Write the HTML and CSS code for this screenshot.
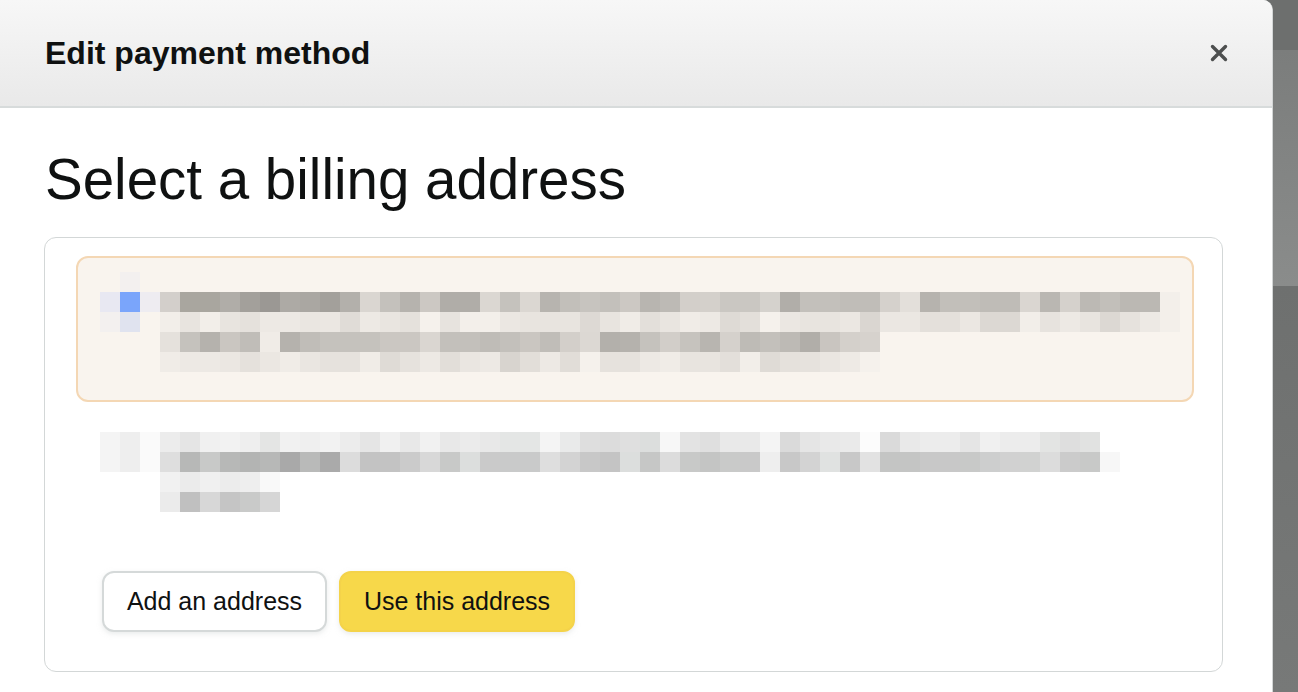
FILE: index.html
```html
<!DOCTYPE html>
<html lang="en">
<head>
<meta charset="utf-8">
<title>Edit payment method</title>
<link rel="stylesheet" href="styles.css">
</head>
<body>
<div class="modal">
  <header class="head">
    <h2>Edit payment method</h2>
    <button class="close" aria-label="Close">
      <svg width="18" height="18" viewBox="0 0 18 18"><path d="M2.5 2.5 L15.5 15.5 M15.5 2.5 L2.5 15.5" stroke="#4d4f4f" stroke-width="3.4" stroke-linecap="round" fill="none"/></svg>
    </button>
  </header>
  <main class="content">
    <h1 class="title">Select a billing address</h1>
    <section class="card">
      <div class="addr selected" id="addr1"></div>
      <div class="addr plain" id="addr2"></div>
      <div class="actions">
        <button class="btn btn-secondary">Add an address</button>
        <button class="btn btn-primary">Use this address</button>
      </div>
    </section>
  </main>
</div>
<div class="backdrop"></div>
<script src="script.js"></script>
</body>
</html>
```

FILE: styles.css
```css
* { box-sizing: border-box; }

html, body { height: 100%; }

body {
  margin: 0;
  height: 692px;
  overflow: hidden;
  display: flex;
  background: #6d6f6e;
  font-family: "Liberation Sans", Arial, sans-serif;
  color: #0f1111;
}

.modal {
  flex: none;
  width: 1273px;
  height: 692px;
  background: #fff;
  border-top-right-radius: 10px;
  border-right: 1px solid #d3d6d6;
  overflow: hidden;
}

.backdrop {
  flex: 1;
  background: linear-gradient(to bottom,
    #6d6f6e 0, #6d6f6e 50px,
    #7b7d7c 50px, #8a8c8b 286px,
    #6e706f 286px, #777978 100%);
}

.head {
  height: 108px;
  background: linear-gradient(to bottom, #f7f7f7, #e9e9e9);
  border-bottom: 2px solid #d7dbdb;
  display: flex;
  align-items: center;
  justify-content: space-between;
  padding: 0 44px 0 45px;
}

.head h2 {
  margin: 0;
  font-size: 32px;
  font-weight: 700;
  color: #0f1111;
}

.close {
  border: 0;
  background: none;
  padding: 0;
  width: 18px;
  height: 18px;
  display: flex;
}

.content {
  padding: 0 49px 0 44px;
}

.title {
  margin: 38px 0 24px 1px;
  font-size: 56.5px;
  line-height: 67px;
  font-weight: 400;
}

.card {
  border: 1px solid #d3d7d7;
  border-radius: 12px;
  padding: 18px 28px 39px 31px;
}

.addr {
  border: 2px solid transparent;
  border-radius: 12px;
  padding-left: 22px;
}

.addr.selected {
  height: 146px;
  padding-top: 14px;
  background: #f9f4ee;
  border-color: #f4d7b4;
}

.addr.plain {
  padding-top: 28px;
}

.px-row {
  display: flex;
  height: 20px;
}

.px {
  flex: none;
  width: 20px;
  height: 20px;
}

.actions {
  display: flex;
  gap: 12px;
  margin-top: 57px;
  padding-left: 26px;
}

.btn {
  height: 61px;
  border-radius: 12px;
  font-family: "Liberation Sans", Arial, sans-serif;
  font-size: 25px;
  color: #0f1111;
  padding: 0;
  white-space: nowrap;
  box-shadow: 0 2px 5px rgba(213, 217, 217, 0.5);
  cursor: pointer;
}

.btn-secondary {
  width: 225px;
  background: #fff;
  border: 2px solid #d5d9d9;
}

.btn-primary {
  width: 236px;
  background: #f7d84a;
  border: 2px solid #f4d34a;
}
```

FILE: script.js
```js
(function () {
  var r2 = ['#d3cfcb','#a9a69f','#a9a69f','#b0ada8','#a3a09b','#9b9894','#adaaa5','#aaa7a2','#a3a09b','#b3b0ab','#dad6d1','#c4c1bc','#b6b3ae','#ccc8c3','#b0ada8','#b0ada8','#dbd7d2','#c5c2bd','#dbd7d2','#b7b4af','#c2bfba','#c7c4bf',
    '#c3c0bb','#ccc8c3','#b8b5b0','#bdbab5','#d3cfca','#d4d0cb','#cac7c2','#cac7c2','#d5d2cd','#b1aea9','#c3c0bb','#c3c0bb','#c0bdb8','#c0bdb8','#d5d1cc','#e3dfda','#b6b3ae','#c2bfba','#c2bfba','#bfbcb7','#bfbcb7','#dad6d1','#bab7b2','#d5d1cc','#bcb9b4','#c2bfba','#bbb8b3','#bbb8b3','#f3efea'];
  var r3 = ['#f2eee9','#e8e4df','#f2eee9','#e8e4df','#e5e1dc','#ede9e4','#ede9e4','#eae6e1','#ebe7e2','#e0dcd7','#ede9e4','#e9e5e0','#e5e1dc','#f5f1ec','#e7e3de','#f3efea','#f3efea','#ebe7e2','#e8e4df','#e8e4df','#e8e4df','#ddd9d4','#e8e4df','#f0ece7','#e3dfda','#e9e5e0','#f0ece7','#ede9e4','#dedad5','#e3dfda','#f5f1ec','#ebe7e2','#e8e4df','#e8e4df','#ebe7e2','#dad6d1','#ebe7e2','#ebe7e2','#e4e0db','#e4e0db','#ebe7e2','#dcd8d3','#dcd8d3','#f2eee9','#e7e3de','#ede9e4','#e8e4df','#dcd8d3','#e6e2dd','#ede9e4','#f3efea'];
  var r4 = ['#e5e1dc','#c5c2bd','#b5b2ad','#cac6c1','#c0bdb8','#f0ece7','#b5b2ad','#c0bdb8','#c5c2bd','#c5c2bd','#c5c2bd','#cbc7c2','#cbc7c2','#dad6d1','#c3c0bb','#c3c0bb','#bfbcb7','#c3c0bb','#cac6c1','#c0bdb8','#d3cfca','#dcd8d3',
    '#b3b0ab','#b5b2ad','#c5c2bd','#d2cec9','#c6c3be','#b8b5b0','#d5d1cc','#bebbb6','#c3c0bb','#bdbab5','#b1aea9','#c9c5c0','#d4d0cb','#d6d2cd'];
  var r5 = ['#f0ece7','#ede9e4','#ede9e4','#ebe7e2','#e5e1dc','#ebe7e2','#f0ece7','#eae6e1','#e6e2dd','#e6e2dd','#f0ece7','#dfdbd6','#e6e2dd','#ede9e4','#e2ded9','#eae6e1','#ede9e4','#d8d4cf','#e2ded9','#ede9e4','#e1ddd8','#f5f1ec',
    '#e6e2dd','#e6e2dd','#ede9e4','#f0ece7','#e8e4df','#e8e4df','#e3dfda','#f2eee9','#dfdbd6','#e5e1dc','#e6e2dd','#eae6e1','#eeeae5','#f5f1ec'];

  var sel = [
    [null, '#f3f0ef'],
    ['#e8e8f2', '#7aa5fb', '#eeecf1'].concat(r2),
    ['#f3f0ef', '#e0e3ef', null].concat(r3),
    [null, null, null].concat(r4),
    [null, null, null].concat(r5)
  ];

  var a = ['#f4f4f4','#eeeeee','#fafafa','#ececec','#e5e5e5','#f0f0f0','#f2f2f2','#eeeeee','#e4e5e4','#f1f1f1','#efefef','#f2f2f2','#ececec','#e5e5e5','#f0f0f0','#e8e8e8','#f1f1f1','#e8e8e8','#ebebeb','#e8e8e8','#e4e6e5','#e4e6e5','#f4f4f4','#e9eaea','#dedede',
    '#dcdcdc','#dfdfdf','#dcdedd','#f7f7f7','#e3e3e3','#dfdfdf','#e9e9e9','#e9e9e9','#f4f4f4','#dadada','#e5e5e5','#e9e9e9','#eaeaea','#fcfcfc','#dadada','#e9e9e9','#ececec','#ececec','#e5e5e5','#f0f0f0','#ececec','#ececec','#e3e4e3','#dedede','#e1e2e1'];
  var b = ['#f4f4f4','#eeeeee','#fafafa','#dedede','#b7b8b7','#c8c9c8','#b7b8b7','#b3b4b3','#b7b8b7','#a9a9a9','#b9bab9','#aaaaaa','#dcdcdc','#c3c3c3','#c3c3c3','#cbcbcb','#d8d8d8','#c8c9c8','#dcdedd','#cacaca','#c9caca','#c9caca','#dedede','#d3d3d3','#c8c8c8',
    '#c4c4c4','#dcdedd','#c6c7c6','#dcdcdc','#c8c9c8','#c4c5c4','#c9cac9','#c9c9c9','#eeeeee','#c8c8c8','#d3d3d3','#e0e2e1','#c8c8c8','#e2e2e2','#c4c5c4','#c4c5c4','#c8c8c8','#c8c8c8','#c8c9c8','#cdcece','#d1d1d1','#d1d2d1','#dcdcdc','#cbcbcb','#c8c9c8','#f7f7f7'];
  var plain = [
    a,
    b,
    [null, null, null, '#f1f1f1', '#ebebeb', '#f0f0f0', '#ececec', '#eeeeee', '#f9f9f9'],
    [null, null, null, '#ebebeb', '#c0c0c0', '#d7d7d7', '#c5c5c5', '#c9cac9', '#d6d6d6']
  ];

  function build(id, rows) {
    var el = document.getElementById(id);
    rows.forEach(function (r) {
      var row = document.createElement('div');
      row.className = 'px-row';
      r.forEach(function (c) {
        var s = document.createElement('span');
        s.className = 'px';
        if (c) s.style.background = c;
        row.appendChild(s);
      });
      el.appendChild(row);
    });
  }

  build('addr1', sel);
  build('addr2', plain);
})();
```
